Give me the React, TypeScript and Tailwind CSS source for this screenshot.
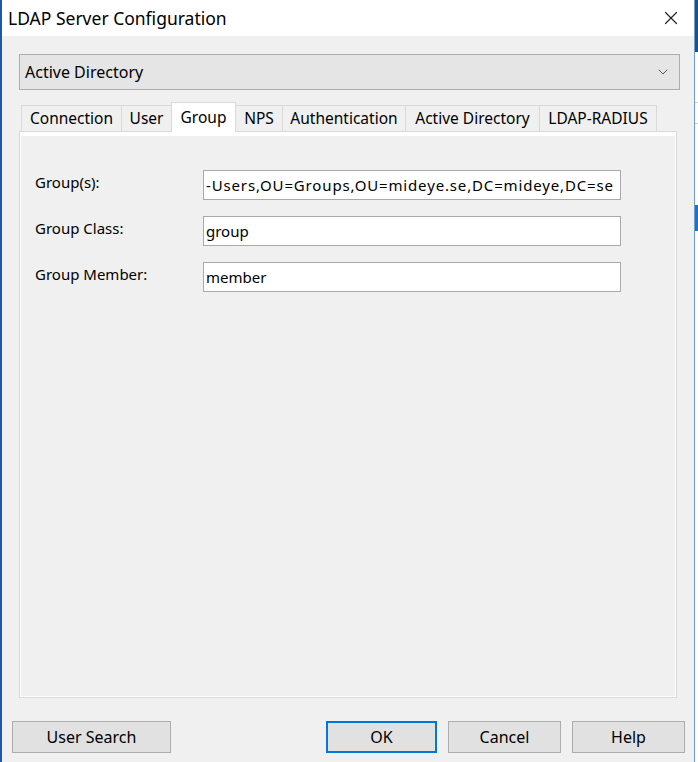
import { ChevronDown, X } from "lucide-react";

const tabs = [
  { label: "Connection", w: "w-[101px]" },
  { label: "User", w: "w-[51px]" },
  { label: "Group", w: "w-[65px]", active: true },
  { label: "NPS", w: "w-[48px]" },
  { label: "Authentication", w: "w-[124px]" },
  { label: "Active Directory", w: "w-[135px]" },
  { label: "LDAP-RADIUS", w: "w-[118px]" },
];

const fields = [
  { label: "Group(s):", value: "-Users,OU=Groups,OU=mideye.se,DC=mideye,DC=se", wide: true },
  { label: "Group Class:", value: "group" },
  { label: "Group Member:", value: "member" },
];

function DialogButton({ label, w, primary }: { label: string; w: string; primary?: boolean }) {
  return (
    <button
      className={`${w} h-[32px] flex items-center justify-center bg-[#e1e1e1] text-[16px] text-black ${
        primary ? "border-2 border-[#0078d7]" : "border border-[#adadad]"
      }`}
    >
      {label}
    </button>
  );
}

export default function App() {
  return (
    <div
      className="w-[698px] h-[762px] flex overflow-hidden bg-white text-black"
      style={{ fontFamily: '"Noto Sans", "Open Sans", sans-serif' }}
    >
      {/* left edge of window frame */}
      <div className="w-[2px] bg-[#1c5aa6]" />

      <div className="w-[692px] flex flex-col bg-[#f0f0f0]">
        {/* title bar */}
        <div className="h-[36px] bg-white flex items-center justify-between pl-[6px] pr-[12px]">
          <span className="text-[17.5px]">LDAP Server Configuration</span>
          <X className="w-[22px] h-[22px] text-[#222]" strokeWidth={1.3} />
        </div>

        <div className="flex flex-col pl-[17px] pr-[14px] pt-[18px]">
          {/* combo box */}
          <div className="h-[36px] bg-[#e5e5e5] border border-[#adadad] flex items-center justify-between pl-[5px] pr-[8px]">
            <span className="text-[16px]">Active Directory</span>
            <ChevronDown className="w-[16px] h-[16px] text-[#555]" strokeWidth={1.5} />
          </div>

          {/* tabs */}
          <div className="mt-[11px] h-[30px] flex items-end pl-[2px]">
            {tabs.map((t) =>
              t.active ? (
                <div
                  key={t.label}
                  className={`${t.w} h-[30px] -ml-px bg-white border border-b-0 border-[#d9d9d9] flex items-start justify-center pt-[3px] text-[15.5px] relative z-10 -mb-px`}
                >
                  {t.label}
                </div>
              ) : (
                <div
                  key={t.label}
                  className={`${t.w} h-[26px] bg-[#f0f0f0] border border-b-0 border-[#d9d9d9] -ml-px first:ml-0 flex items-center justify-center text-[15.5px]`}
                >
                  {t.label}
                </div>
              )
            )}
          </div>

          {/* tab panel */}
          <div className="w-[658px] h-[567px] border border-[#d9d9d9] bg-white pt-[4px] pl-[1px] pr-[1px] pb-px">
            <div className="h-full bg-[#f0f0f0] flex flex-col gap-[16px] pt-[34px] pl-[14px]">
              {fields.map((f) => (
                <div key={f.label} className="flex items-center">
                  <span className="w-[168px] text-[15px] -mt-[6px]">{f.label}</span>
                  <div
                    className={`w-[418px] h-[30px] bg-white border border-[#a9a9a9] flex items-center pl-[2px] overflow-hidden whitespace-nowrap text-[15px] ${
                      f.wide ? "tracking-[0.85px]" : ""
                    }`}
                  >
                    {f.value}
                  </div>
                </div>
              ))}
            </div>
          </div>
        </div>

        {/* bottom buttons */}
        <div className="flex items-center pl-[10px] mt-[23px]">
          <DialogButton label="User Search" w="w-[159px]" />
          <div className="flex gap-[11px] ml-[155px]">
            <DialogButton label="OK" w="w-[111px]" primary />
            <DialogButton label="Cancel" w="w-[113px]" />
            <DialogButton label="Help" w="w-[113px]" />
          </div>
        </div>
      </div>

      {/* right edge: frame line and window behind */}
      <div className="w-px bg-[#6a9fd4]" />
      <div className="w-[3px] flex flex-col bg-white">
        <div className="h-[52px] bg-[#1c4f8c]" />
        <div className="h-[50px]" />
        <div className="h-px bg-[#d0d0d0]" />
        <div className="h-[20px]" />
        <div className="h-px bg-[#d0d0d0]" />
        <div className="h-[81px]" />
        <div className="h-[26px] bg-[#1a73d0]" />
        <div className="flex-1" />
      </div>
    </div>
  );
}
